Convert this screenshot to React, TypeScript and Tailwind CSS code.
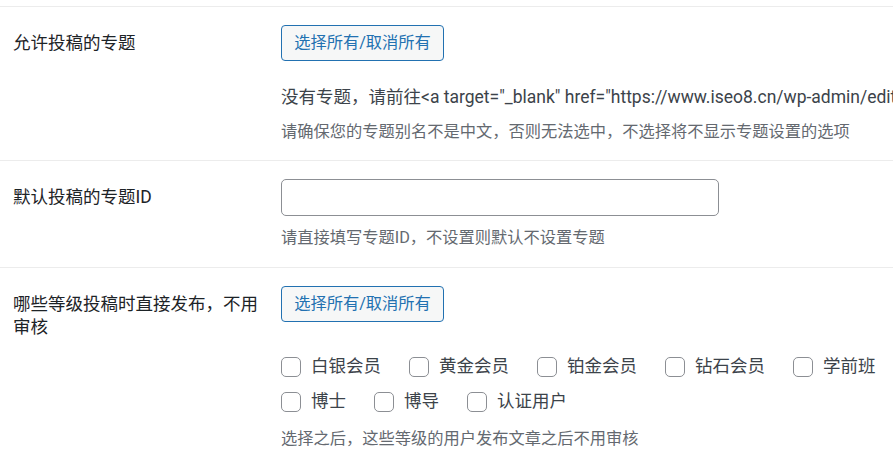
import React from "react";

const font = { fontFamily: '"Segoe UI", Roboto, "Noto Sans CJK SC", sans-serif' };

const levels = ["白银会员", "黄金会员", "铂金会员", "钻石会员", "学前班", "博士", "博导", "认证用户"];

function ToggleAllButton() {
    return (
        <button
            type="button"
            className="h-[36px] w-[163px] rounded-[4px] border border-[#2271b1] bg-[#f6f7f7] text-[16.25px] leading-none text-[#2271b1]"
        >
            选择所有/取消所有
        </button>
    );
}

function Row({ label, children }: { label: string; children: React.ReactNode }) {
    return (
        <div className="flex border-b border-[#ececec]">
            <div className="w-[281px] shrink-0 pl-[13px] pr-[18px] pt-[25px] text-[17.5px] leading-[23px] text-[#1d2327]">
                {label}
            </div>
            <div className="min-w-0 flex-1 pt-[18px]">{children}</div>
        </div>
    );
}

export default function App() {
    return (
        <div className="h-[464px] w-full overflow-hidden bg-white" style={font}>
            <div className="h-[7px] border-b border-[#ececec]" />

            <Row label="允许投稿的专题">
                <ToggleAllButton />
                <p className="mt-[23px] whitespace-nowrap text-[17.5px] leading-[26px] text-[#3c434a]">
                    没有专题，请前往&lt;a target="_blank" href="https://www.iseo8.cn/wp-admin/edit-tags.php?taxonomy=special"&gt;这里&lt;/a&gt;添加专题
                </p>
                <p className="mt-[10px] pb-[16px] whitespace-nowrap text-[16.25px] leading-[24px] text-[#646970]">
                    请确保您的专题别名不是中文，否则无法选中，不选择将不显示专题设置的选项
                </p>
            </Row>

            <Row label="默认投稿的专题ID">
                <input
                    type="text"
                    className="block h-[37px] w-[438px] rounded-[5px] border border-[#8c8f94] bg-white px-2 text-[17.5px] outline-none"
                />
                <p className="mt-[10px] pb-[17px] text-[16.25px] leading-[24px] text-[#646970]">
                    请直接填写专题ID，不设置则默认不设置专题
                </p>
            </Row>

            <Row label="哪些等级投稿时直接发布，不用审核">
                <ToggleAllButton />
                <div className="mt-[27px] flex w-[640px] flex-wrap">
                    {levels.map((name) => (
                        <label key={name} className="mr-[28px] flex h-[35px] items-center text-[17.5px] text-[#3c434a]">
                            <span className="mr-[10px] inline-block h-[20px] w-[20px] rounded-[5px] border border-[#8c8f94] bg-white" />
                            {name}
                        </label>
                    ))}
                </div>
                <p className="mt-[8px] pb-[16px] text-[16.25px] leading-[24px] text-[#646970]">
                    选择之后，这些等级的用户发布文章之后不用审核
                </p>
            </Row>
        </div>
    );
}
